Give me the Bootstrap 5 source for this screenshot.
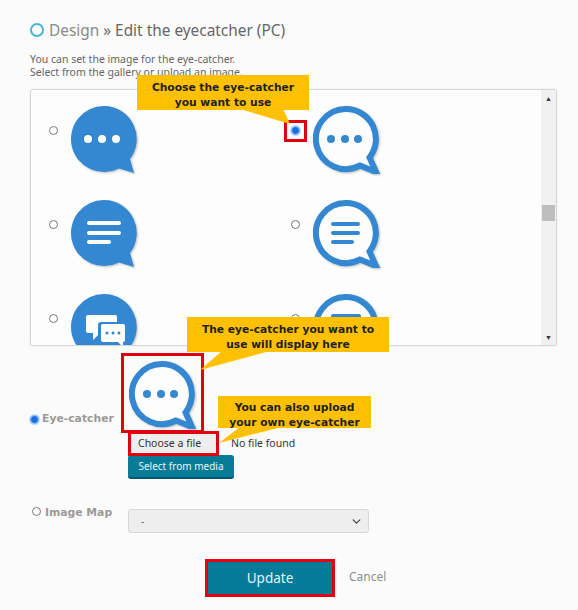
<!DOCTYPE html>
<html lang="en">
<head>
  <meta charset="UTF-8">
  <meta name="viewport" content="width=device-width, initial-scale=1">
  <title>Edit the eyecatcher</title>
  <link href="https://cdn.jsdelivr.net/npm/bootstrap@5.3.3/dist/css/bootstrap.min.css" rel="stylesheet">
  <style>
    body { background: #fbfbfb; font-family: "Noto Sans", "Liberation Sans", sans-serif; color: #555; }
    .page-wrap { position: relative; width: 578px; height: 610px; overflow: hidden; padding: 21px 21px 0 30px; }
    .page-title { font-size: 15.4px; line-height: 20px; font-weight: 400; margin: 0 0 12px; color: #666; }
    .page-title .crumb { color: #8a8a8a; }
    .title-ring { display: inline-block; width: 14px; height: 14px; border: 2px solid #45b6d8; border-radius: 50%; margin-right: 5px; vertical-align: -1px; }
    .intro-text { font-size: 10.5px; line-height: 13px; margin: 0 0 10px; color: #666; }
    .gallery-box { height: 257px; border: 1px solid #d6d6d6; border-radius: 3px; background: #fdfdfd; overflow: hidden; box-shadow: 0 0 2px #e5e5e5; }
    .gallery-list { width: 510px; padding: 15px 0 0 18px; }
    .gallery-list .row { --bs-gutter-x: 0; width: 484px; }
    .gallery-item { height: 94px; gap: 13px; align-items: flex-start; }
    .gallery-item .bubble-svg { margin-top: 1px; }
    .form-check-input[type=radio] { width: 9px; height: 9px; margin: 0; border: 1px solid #777; background-color: #fff; flex: none; float: none; }
    .gallery-item .form-check-input[type=radio] { margin-top: 21px; }
    .form-check-input:checked[type=radio] { background-color: #1a6fe0; border-color: #9cc4f5; box-shadow: 0 0 0 1px #bcd8fa; background-image: none; }
    .bubble-svg { width: 68px; height: 68px; flex: none; display: block; filter: drop-shadow(1px 1px 1px rgba(0,0,0,.25)); }
    .fake-scroll { width: 15px; margin-left: auto; background: #f1f1f1; position: relative; font-size: 7px; line-height: 1; color: #333; text-align: center; padding-top: 5px; }
    .fake-scroll .scroll-down { position: absolute; bottom: 4px; left: 0; right: 0; }
    .scroll-thumb { position: absolute; top: 115px; left: 1px; width: 13px; height: 16px; background: #bdbdbd; }
    .form-side { width: 98px; font-size: 10.8px; font-weight: 700; color: #9a9a9a; font-family: "DejaVu Sans", sans-serif; gap: 3px; flex: none; }
    .pick-block { margin-top: 15px; }
    .pick-block .form-side { padding: 50px 0 0 0; }
    .preview-bubble { margin: 0 0 5px 1px; }
    .file-row { gap: 12px; font-size: 10.5px; color: #333; }
    .file-btn { width: 85px; height: 18px; background: #eee; border: 0; font-size: 10.5px; padding: 0; color: #333; margin: 0 3px 2px 3px; line-height: 18px; text-align: left; padding-left: 7px; }
    .media-btn { background: #087b96; color: #e8f6fa; border: 0; border-bottom: 2px solid #05586c; border-radius: 3px; font-size: 10px; height: 24px; width: 106px; padding: 0; margin-top: 1px; }
    .map-block { margin-top: 30px; }
    .map-block .form-side { padding: 0 0 0 2px; margin-top: -4px; gap: 4px; }
    .map-block .form-check-input[type=radio] { margin-top: 2px; }
    .map-select { width: 241px; height: 24px; padding: 0 8px 0 12px; font-size: 10px; background-color: #eee; border-color: #d8d8d8; border-radius: 3px; color: #666; background-size: 11px 9px; background-position: right 6px center; }
    .action-row { margin: 26px 0 0 175px; gap: 14px; }
    .update-btn { width: 130px; height: 38px; background: #057b99; border: 3px solid #e0000f; border-radius: 0; color: #e4f4f8; font-size: 13.5px; padding: 0; }
    .update-btn:hover { background: #057b99; color: #e4f4f8; border-color: #e0000f; }
    .cancel-link { font-size: 12px; color: #8e8e8e; text-decoration: none; margin-top: -2px; }
    .callout { position: absolute; background: #ffc000; color: #222; font-family: "DejaVu Sans", sans-serif; font-weight: 700; font-size: 10.7px; line-height: 15px; text-align: center; z-index: 3; padding-top: 5px; }
    .co-gallery { left: 137px; top: 75px; width: 172px; height: 35px; }
    .co-preview { left: 187px; top: 317px; width: 202px; height: 35px; }
    .co-upload { left: 218px; top: 396px; width: 153px; height: 32px; padding-top: 4px; }
    .tail-layer { position: absolute; left: 0; top: 0; z-index: 3; pointer-events: none; }
    .red-frame { position: absolute; border: 3px solid #e0000f; z-index: 2; pointer-events: none; }
    .rf-radio { left: 284px; top: 120px; width: 23px; height: 22px; }
    .rf-preview { left: 121px; top: 353px; width: 83px; height: 80px; }
    .rf-file { left: 128px; top: 431px; width: 91px; height: 25px; }
  </style>
</head>
<body>
  <svg width="0" height="0" class="position-absolute">
    <symbol id="bubbleSolid" viewBox="0 0 68 68">
      <path d="M33 0A33 33 0 1 0 48 62.400L63 67 59 53A33 33 0 0 0 33 0z" fill="#3388d1"/>
    </symbol>
    <symbol id="bubbleLine" viewBox="0 0 68 68">
      <path d="M33 3A30 30 0 1 0 47 59.500L63 66 56.500 51.500A30 30 0 0 0 33 3z" fill="#fdfdfd" stroke="#3388d1" stroke-width="6"/>
    </symbol>
  </svg>

  <div class="page-wrap">
    <h1 class="page-title"><span class="title-ring"></span><span class="crumb">Design</span> » Edit the eyecatcher (PC)</h1>
    <p class="intro-text">You can set the image for the eye-catcher.<br>Select from the gallery or upload an image.</p>

    <!-- gallery -->
    <div class="gallery-box d-flex">
      <div class="gallery-list">
        <div class="row">
          <div class="col-6 d-flex gallery-item">
            <input class="form-check-input" type="radio" name="gal">
            <svg class="bubble-svg"><use href="#bubbleSolid"/><g fill="#fff"><circle cx="17" cy="33" r="4"/><circle cx="31" cy="33" r="4"/><circle cx="45" cy="33" r="4"/></g></svg>
          </div>
          <div class="col-6 d-flex gallery-item">
            <input class="form-check-input" type="radio" name="gal" checked>
            <svg class="bubble-svg"><use href="#bubbleLine"/><g fill="#3388d1"><circle cx="18" cy="33" r="4"/><circle cx="32" cy="33" r="4"/><circle cx="45" cy="33" r="4"/></g></svg>
          </div>
          <div class="col-6 d-flex gallery-item">
            <input class="form-check-input" type="radio" name="gal">
            <svg class="bubble-svg"><use href="#bubbleSolid"/><g fill="#fff"><rect x="16" y="21" width="34" height="4" rx="2"/><rect x="16" y="31" width="34" height="4" rx="2"/><rect x="16" y="40" width="24" height="4" rx="2"/></g></svg>
          </div>
          <div class="col-6 d-flex gallery-item">
            <input class="form-check-input" type="radio" name="gal">
            <svg class="bubble-svg"><use href="#bubbleLine"/><g fill="#3388d1"><rect x="18" y="22" width="29" height="4" rx="2"/><rect x="18" y="31" width="29" height="4" rx="2"/><rect x="18" y="40" width="23" height="4" rx="2"/></g></svg>
          </div>
          <div class="col-6 d-flex gallery-item">
            <input class="form-check-input" type="radio" name="gal">
            <svg class="bubble-svg"><use href="#bubbleSolid"/><path d="M17 21h27a2 2 0 0 1 2 2v5H30a3 3 0 0 0-3 3v10l-5 5v-7h-5a2 2 0 0 1-2-2V23a2 2 0 0 1 2-2z" fill="#fff"/><path d="M32 30h20a2 2 0 0 1 2 2v14a2 2 0 0 1-2 2v5l-5-5H32a2 2 0 0 1-2-2V32a2 2 0 0 1 2-2z" fill="#fff"/><g fill="#3388d1"><circle cx="36" cy="39" r="1.500"/><circle cx="42" cy="39" r="1.500"/><circle cx="48" cy="39" r="1.500"/></g></svg>
          </div>
          <div class="col-6 d-flex gallery-item">
            <input class="form-check-input" type="radio" name="gal">
            <svg class="bubble-svg"><use href="#bubbleLine"/><rect x="18" y="20" width="30" height="14" rx="2" fill="#3388d1"/></svg>
          </div>
        </div>
      </div>
      <div class="fake-scroll">▲<div class="scroll-thumb"></div><div class="scroll-down">▼</div></div>
    </div>

    <!-- eye-catcher row -->
    <div class="d-flex pick-block">
      <label class="form-side d-flex align-items-start">
        <input class="form-check-input mt-1" type="radio" name="kind" checked> Eye-catcher
      </label>
      <div>
        <svg class="bubble-svg preview-bubble"><use href="#bubbleLine"/><g fill="#3388d1"><circle cx="18" cy="33" r="4"/><circle cx="32" cy="33" r="4"/><circle cx="45" cy="33" r="4"/></g></svg>
        <div class="d-flex align-items-center file-row">
          <button type="button" class="file-btn">Choose a file</button>
          <span>No file found</span>
        </div>
        <button type="button" class="btn media-btn d-block">Select from media</button>
      </div>
    </div>

    <!-- image map row -->
    <div class="d-flex map-block">
      <label class="form-side d-flex align-items-start">
        <input class="form-check-input" type="radio" name="kind"> Image Map
      </label>
      <select class="form-select map-select"><option>-</option></select>
    </div>

    <div class="d-flex align-items-center action-row">
      <button type="button" class="btn update-btn">Update</button>
      <a href="#" class="cancel-link">Cancel</a>
    </div>

    <!-- annotations over the screenshot -->
    <div class="callout co-gallery">Choose the eye-catcher<br>you want to use</div>
    <div class="callout co-preview">The eye-catcher you want to<br>use will display here</div>
    <div class="callout co-upload">You can also upload<br>your own eye-catcher</div>
    <svg class="tail-layer" width="578" height="610">
      <polygon points="240,109 283,109 290,124" fill="#ffc000"/>
      <polygon points="222,351 270,351 200,370" fill="#ffc000"/>
      <polygon points="240,427 282,427 219,443" fill="#ffc000"/>
    </svg>
    <div class="red-frame rf-radio"></div>
    <div class="red-frame rf-preview"></div>
    <div class="red-frame rf-file"></div>
  </div>

  <script src="https://cdn.jsdelivr.net/npm/bootstrap@5.3.3/dist/js/bootstrap.bundle.min.js"></script>
</body>
</html>
